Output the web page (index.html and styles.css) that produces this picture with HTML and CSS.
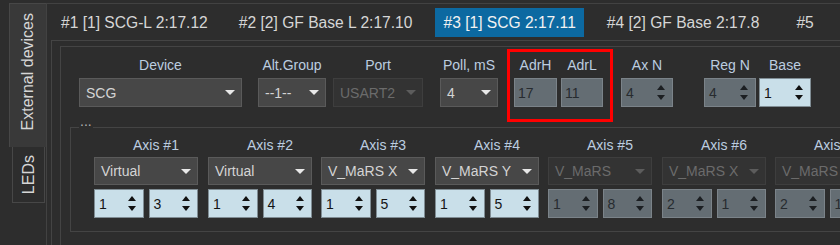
FILE: index.html
```html
<!DOCTYPE html>
<html>
<head>
<meta charset="utf-8">
<link rel="stylesheet" href="styles.css">
</head>
<body>
<div class="app">
  <div class="vtabs">
    <div class="vtab active"><span>External devices</span></div>
    <div class="vtab leds"><span>LEDs</span></div>
  </div>
  <div class="main">
    <div class="htabs">
      <div class="htab">#1 [1] SCG-L 2:17.12</div>
      <div class="htab">#2 [2] GF Base L 2:17.10</div>
      <div class="htab active">#3 [1] SCG 2:17.11</div>
      <div class="htab">#4 [2] GF Base 2:17.8</div>
      <div class="htab last">#5</div>
    </div>
    <div class="pane">
      <div class="frame">
        <div class="toprow">
          <div class="field w-device">
            <div class="lbl">Device</div>
            <div class="combo"><span>SCG</span><i class="arrow"></i></div>
          </div>
          <div class="field w-alt">
            <div class="lbl">Alt.Group</div>
            <div class="combo"><span>--1--</span><i class="arrow"></i></div>
          </div>
          <div class="field w-port">
            <div class="lbl">Port</div>
            <div class="combo disabled"><span>USART2</span><i class="arrow"></i></div>
          </div>
          <div class="field w-poll">
            <div class="lbl">Poll, mS</div>
            <div class="combo"><span>4</span><i class="arrow"></i></div>
          </div>
          <div class="adr">
            <div class="field w-adrh">
              <div class="lbl">AdrH</div>
              <div class="edit grey">17</div>
            </div>
            <div class="field w-adrl">
              <div class="lbl">AdrL</div>
              <div class="edit grey">11</div>
            </div>
          </div>
          <div class="field w-axn">
            <div class="lbl">Ax N</div>
            <div class="spin grey"><span>4</span><i class="ud"></i></div>
          </div>
          <div class="field w-regn">
            <div class="lbl">Reg N</div>
            <div class="spin grey"><span>4</span><i class="ud"></i></div>
          </div>
          <div class="field w-base">
            <div class="lbl">Base</div>
            <div class="spin light"><span>1</span><i class="ud"></i></div>
          </div>
        </div>
        <div class="group">
          <span class="gtitle">...</span>
          <div class="axes">
            <div class="axis">
              <div class="lbl">Axis #1</div>
              <div class="combo small"><span>Virtual</span><i class="arrow"></i></div>
              <div class="spins">
                <div class="spin light"><span>1</span><i class="ud"></i></div>
                <div class="spin light"><span>3</span><i class="ud"></i></div>
              </div>
            </div>
            <div class="axis">
              <div class="lbl">Axis #2</div>
              <div class="combo small"><span>Virtual</span><i class="arrow"></i></div>
              <div class="spins">
                <div class="spin light"><span>1</span><i class="ud"></i></div>
                <div class="spin light"><span>4</span><i class="ud"></i></div>
              </div>
            </div>
            <div class="axis">
              <div class="lbl">Axis #3</div>
              <div class="combo small"><span>V_MaRS X</span><i class="arrow"></i></div>
              <div class="spins">
                <div class="spin light"><span>1</span><i class="ud"></i></div>
                <div class="spin light"><span>5</span><i class="ud"></i></div>
              </div>
            </div>
            <div class="axis">
              <div class="lbl">Axis #4</div>
              <div class="combo small"><span>V_MaRS Y</span><i class="arrow"></i></div>
              <div class="spins">
                <div class="spin light"><span>1</span><i class="ud"></i></div>
                <div class="spin light"><span>5</span><i class="ud"></i></div>
              </div>
            </div>
            <div class="axis">
              <div class="lbl">Axis #5</div>
              <div class="combo small disabled"><span>V_MaRS</span><i class="arrow"></i></div>
              <div class="spins">
                <div class="spin grey"><span>1</span><i class="ud"></i></div>
                <div class="spin grey"><span>8</span><i class="ud"></i></div>
              </div>
            </div>
            <div class="axis">
              <div class="lbl">Axis #6</div>
              <div class="combo small disabled"><span>V_MaRS X</span><i class="arrow"></i></div>
              <div class="spins">
                <div class="spin grey"><span>2</span><i class="ud"></i></div>
                <div class="spin grey"><span>1</span><i class="ud"></i></div>
              </div>
            </div>
            <div class="axis">
              <div class="lbl">Axis #7</div>
              <div class="combo small disabled"><span>V_MaRS</span><i class="arrow"></i></div>
              <div class="spins">
                <div class="spin grey"><span>2</span><i class="ud"></i></div>
                <div class="spin grey"><span>1</span><i class="ud"></i></div>
              </div>
            </div>
          </div>
        </div>
      </div>
    </div>
  </div>
</div>
</body>
</html>
```

FILE: styles.css
```css
* { box-sizing: border-box; }

body {
  margin: 0;
  width: 840px;
  height: 245px;
  overflow: hidden;
  background: #2d2d2d;
  font-family: "Liberation Sans", Arial, sans-serif;
  font-size: 14px;
  color: #d2d2d2;
}

.app {
  display: flex;
  height: 245px;
}

/* vertical tabs */
.vtabs {
  width: 46px;
  flex: none;
  display: flex;
  flex-direction: column;
  padding: 3px 0 0 9px;
}

.vtab {
  display: flex;
  align-items: center;
  justify-content: center;
  font-size: 16px;
  color: #d6d6d6;
}

.vtab span {
  writing-mode: vertical-rl;
  transform: rotate(180deg);
  white-space: nowrap;
}

.vtab.active {
  width: 37px;
  height: 144px;
  background: #393939;
  border-top: 1px solid #474747;
  border-left: 1px solid #474747;
  padding-bottom: 7px;
}

.vtab.leds {
  width: 33px;
  height: 56px;
  margin-left: 3px;
  border: 1px solid #474747;
  border-top: none;
}

/* main */
.main {
  flex: 1;
  margin-top: 3px;
  border-top: 1px solid #424242;
  border-left: 1px solid #424242;
  min-width: 0;
}

.htabs {
  display: flex;
  gap: 15px;
  height: 29px;
  margin: 4px 0 0 6px;
}

.htab {
  padding: 0 8px;
  line-height: 29px;
  font-size: 15.6px;
  color: #d6d6d6;
  white-space: nowrap;
}

.htab.last { margin-left: 6px; }

.htab.active {
  background: #0c69a1;
  color: #f2f2f2;
}

.pane {
  margin: 3px 0 0 4px;
  border-top: 1px solid #444;
  border-left: 1px solid #444;
  padding: 5px 0 0 8px;
}

.frame {
  border-top: 1px solid #444;
  border-left: 1px solid #444;
  padding-top: 9px;
  height: 200px;
}

/* top row */
.toprow {
  display: flex;
  align-items: flex-start;
  padding-left: 18px;
}

.field {
  display: flex;
  flex-direction: column;
  flex: none;
}

.lbl {
  height: 18px;
  line-height: 18px;
  text-align: center;
  color: #bccde0;
  white-space: nowrap;
  margin-bottom: 4px;
}

.w-device { width: 163px; }
.w-alt { width: 68px; margin-left: 16px; }
.w-port { width: 90px; margin-left: 7px; }
.w-poll { width: 58px; margin-left: 17px; }
.w-adrh { width: 43px; }
.w-adrl { width: 42px; margin-left: 4px; }
.w-axn { width: 52px; margin-left: 18px; }
.w-regn { width: 52px; margin-left: 31px; }
.w-base { width: 52px; margin-left: 3px; }

.adr {
  position: relative;
  display: flex;
  margin-left: 16px;
  flex: none;
}

.adr::after {
  content: "";
  position: absolute;
  left: -7px;
  right: -10px;
  top: -7px;
  bottom: -15px;
  border: 3px solid #ff0000;
}

/* controls */
.combo {
  height: 29px;
  border: 1px solid #5a5a5a;
  background: #474747;
  display: flex;
  align-items: center;
  justify-content: space-between;
  padding: 0 6px;
  color: #d4d4d4;
  white-space: nowrap;
  overflow: hidden;
}

.combo.small { height: 28px; }

.arrow {
  flex: none;
  width: 0;
  height: 0;
  border-left: 5px solid transparent;
  border-right: 5px solid transparent;
  border-top: 5px solid #e8e8e8;
}

.combo.disabled {
  background: #333333;
  border-color: #3e3e3e;
  color: #6b6b6b;
}

.combo.disabled .arrow {
  border-top-color: #5c5c5c;
}

.edit {
  height: 29px;
  border: 1px solid #7b8389;
  display: flex;
  align-items: center;
  padding: 0 3px;
}

.spin {
  height: 29px;
  border: 1px solid #7b8389;
  display: flex;
  align-items: center;
  justify-content: space-between;
  padding: 0 7px 0 4px;
}

.spins .spin {
  flex: 1 1 0;
}

.grey {
  background: #646d73;
  color: #272b2f;
}

.light {
  background: #c9dfe9;
  border-color: #808d94;
  color: #141414;
}

.ud {
  display: flex;
  flex-direction: column;
  gap: 5px;
  flex: none;
}

.ud::before,
.ud::after {
  content: "";
  width: 0;
  height: 0;
  border-left: 4.5px solid transparent;
  border-right: 4.5px solid transparent;
}

.ud::before { border-bottom: 5px solid #111; }
.ud::after { border-top: 5px solid #111; }

.grey .ud::before { border-bottom-color: #1c1f22; }
.grey .ud::after { border-top-color: #1c1f22; }

/* axis group */
.group {
  position: relative;
  width: max-content;
  margin: 20px 0 0 9px;
  border: 1px solid #444;
  padding: 8px 20px 13px 23px;
}

.gtitle {
  position: absolute;
  left: 8px;
  top: -16px;
  line-height: 18px;
  padding: 0 1px;
  background: #2d2d2d;
  color: #b0b0b0;
  font-size: 14px;
}

.axes {
  display: flex;
  gap: 9px;
}

.axis {
  width: 104px;
  display: flex;
  flex-direction: column;
}

.axis:nth-child(even) { margin-left: 1px; }

.axis .lbl {
  padding-left: 20px;
  margin-bottom: 3px;
}

.spins {
  display: flex;
  gap: 5px;
  margin-top: 4px;
}
```
